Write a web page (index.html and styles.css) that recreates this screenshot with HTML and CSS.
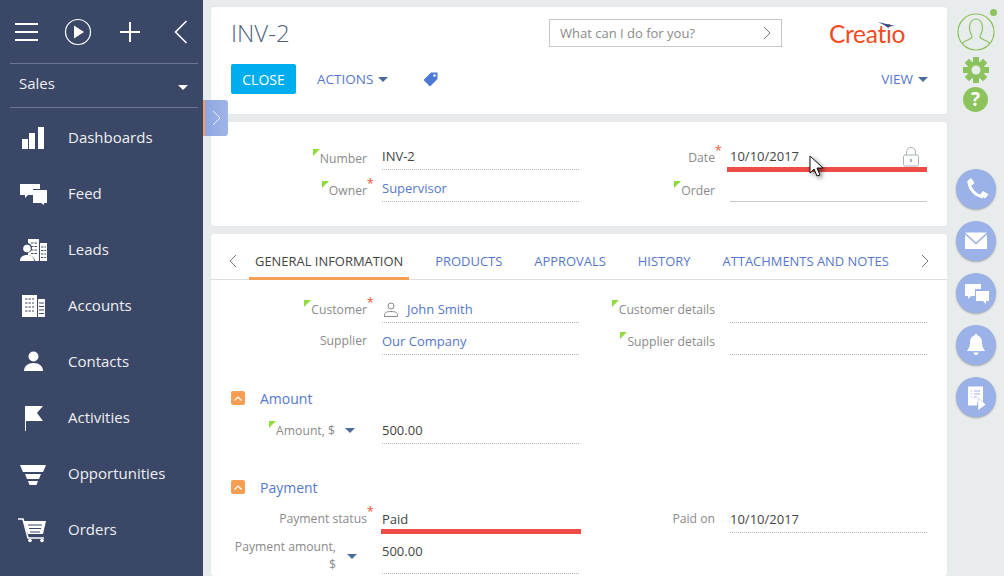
FILE: index.html
```html
<!DOCTYPE html>
<html lang="en">
<head>
<meta charset="UTF-8">
<meta name="viewport" content="width=device-width, initial-scale=1.0">
<title>INV-2</title>
<link rel="stylesheet" href="styles.css">
</head>
<body>

<aside class="sidebar">
    <div class="toolbar">
        <svg class="tool-icon" width="24" height="20" viewBox="0 0 24 20"><path d="M0 2h23M0 10h23M0 18h23" stroke="#fff" stroke-width="2"/></svg>
        <svg class="tool-icon tool-play" width="28" height="28" viewBox="0 0 28 28"><circle cx="14" cy="14" r="12.5" fill="none" stroke="#fff" stroke-width="1.2"/><path d="M10 7.5l10 6.5-10 6.5z" fill="#fff"/></svg>
        <svg class="tool-icon tool-plus" width="22" height="22" viewBox="0 0 22 22"><path d="M1 11h20M11 1v20" stroke="#fff" stroke-width="2"/></svg>
        <svg class="tool-icon tool-back" width="14" height="24" viewBox="0 0 14 24"><path d="M12.5 1L1.5 12l11 11" fill="none" stroke="#fff" stroke-width="1.6"/></svg>
    </div>
    <div class="workplace">
        <span>Sales</span>
        <i class="workplace-caret"></i>
    </div>
    <nav class="nav">
        <a class="nav-item">
            <svg width="28" height="28" viewBox="0 0 28 28"><path d="M2 15h6v10H2zM9 9h6v16H9zM18 3h6v22h-6z" fill="#fff"/></svg>
            <span>Dashboards</span>
        </a>
        <a class="nav-item">
            <svg width="28" height="28" viewBox="0 0 28 28"><path d="M0 4h20v5h-7v6H8l-3 3v-3H0z" fill="#fff"/><path d="M13 10h14v13h-3v2l-3-2H13z" fill="#fff"/></svg>
            <span>Feed</span>
        </a>
        <a class="nav-item">
            <svg width="28" height="28" viewBox="0 0 28 28"><path d="M8 3h11v22H8zM20 7h7v18h-7z" fill="#fff"/><path d="M11 7h6M11 10.500h6M11 14h6M11 17.500h6M21 11h5M21 14.500h5M21 18h5M21 21.500h5" stroke="#3a4766" stroke-width="1" stroke-dasharray="2.500 1"/><circle cx="7" cy="12" r="5" fill="#3a4766"/><path d="M0 26c0-5 3-7 7-7s8 2 8 7z" fill="#3a4766"/><circle cx="7" cy="12.500" r="3.800" fill="#fff"/><path d="M0 25c0-4 3-6 7-6s7 2 7 6z" fill="#fff"/></svg>
            <span>Leads</span>
        </a>
        <a class="nav-item">
            <svg width="28" height="28" viewBox="0 0 28 28"><path d="M2 3h15v22H2zM18 7h7v18h-7z" fill="#fff"/><path d="M5 7h9M5 11h9M5 15h9M5 19h9" stroke="#3a4766" stroke-width="1" stroke-dasharray="2.500 1"/><path d="M19 11h5M19 14.500h5M19 18h5M19 21.500h5" stroke="#3a4766" stroke-width="1"/></svg>
            <span>Accounts</span>
        </a>
        <a class="nav-item">
            <svg width="28" height="28" viewBox="0 0 28 28"><circle cx="13.500" cy="8.500" r="5" fill="#fff"/><path d="M4 23c0-5 4-8 9.500-8s9.500 3 9.500 8z" fill="#fff"/></svg>
            <span>Contacts</span>
        </a>
        <a class="nav-item">
            <svg width="28" height="28" viewBox="0 0 28 28"><path d="M5 2h1v25H5z" fill="#fff"/><path d="M6 2h17l-6 7 6 8H6z" fill="#fff"/></svg>
            <span>Activities</span>
        </a>
        <a class="nav-item">
            <svg width="28" height="28" viewBox="0 0 28 28"><path d="M0 5h26l-3 7H3zM5 14h16l-2 5H7zM8 21h10l-1.500 4h-7z" fill="#fff"/></svg>
            <span>Opportunities</span>
        </a>
        <a class="nav-item">
            <svg class="cart" width="28" height="28" viewBox="0 0 28 28"><path d="M-2 3h5l5 19h16" fill="none" stroke="#fff" stroke-width="1.600"/><path d="M3.500 5H26l-3 13H8z" fill="#fff"/><path d="M8 9h14M9 12.500h12M10 16h10" stroke="#3a4766" stroke-width="1.200"/><circle cx="10" cy="24.500" r="1.800" fill="#fff"/><circle cx="22" cy="24.500" r="1.800" fill="#fff"/></svg>
            <span>Orders</span>
        </a>
        <a class="nav-item">
            <svg width="28" height="28" viewBox="0 0 28 28"><path d="M4 8h19v20H4z" fill="#fff"/></svg>
        </a>
    </nav>
</aside>

<div class="panel-toggle">
    <svg width="9" height="16" viewBox="0 0 9 16"><path d="M1 1l7 7-7 7" fill="none" stroke="#e4ebfa" stroke-width="1"/></svg>
</div>

<main class="content">
    <section class="card card-header">
        <div class="header-top">
            <h1 class="page-title">INV-2</h1>
            <div class="search-box">
                <span>What can I do for you?</span>
                <svg width="8" height="14" viewBox="0 0 8 14"><path d="M1 1l6 6-6 6" fill="none" stroke="#777" stroke-width="1"/></svg>
            </div>
            <div class="logo">
                <span class="logo-text">Creatio</span>
                <svg class="logo-swoosh" width="18" height="7" viewBox="0 0 18 7"><path d="M0 0l17 4-7 .5 1.500 2.500L7 3.500z" fill="#2b4a86"/></svg>
            </div>
        </div>
        <div class="header-actions">
            <button class="btn-close">CLOSE</button>
            <a class="action-link">ACTIONS <i class="caret"></i></a>
            <svg class="tag-icon" width="15" height="15" viewBox="0 0 15 15"><path d="M8 .5h6.500V7L7 14.500.5 8z" fill="#4d78d6"/><circle cx="11.500" cy="3.500" r="1.300" fill="#fff"/></svg>
            <a class="action-link view-link">VIEW <i class="caret"></i></a>
        </div>
    </section>

    <section class="card card-record">
        <div class="field-grid">
            <div class="field">
                <label class="field-label"><span class="mark">Number</span></label>
                <div class="field-value">INV-2</div>
            </div>
            <div class="field">
                <label class="field-label plain"><span class="req">Date</span></label>
                <div class="field-value no-line">10/10/2017
                    <svg class="lock-icon" width="16" height="20" viewBox="0 0 16 20"><path d="M3.500 8V5a4.500 4.500 0 0 1 9 0v3" fill="none" stroke="#a9afbb" stroke-width="1"/><rect x=".5" y="8" width="15" height="11" rx="1.500" fill="none" stroke="#a9afbb" stroke-width="1"/><rect x="7" y="12" width="2" height="3" fill="#a9afbb"/></svg>
                </div>
            </div>
            <div class="field">
                <label class="field-label"><span class="mark req">Owner</span></label>
                <div class="field-value"><a class="link">Supervisor</a></div>
            </div>
            <div class="field">
                <label class="field-label"><span class="mark">Order</span></label>
                <div class="field-value solid"></div>
            </div>
        </div>
    </section>

    <section class="card card-tabs">
        <div class="tabs">
            <svg class="tab-arrow" width="8" height="14" viewBox="0 0 8 14"><path d="M7 1L1 7l6 6" fill="none" stroke="#777" stroke-width="1"/></svg>
            <a class="tab tab-active">GENERAL INFORMATION</a>
            <a class="tab">PRODUCTS</a>
            <a class="tab">APPROVALS</a>
            <a class="tab">HISTORY</a>
            <a class="tab">ATTACHMENTS AND NOTES</a>
            <svg class="tab-arrow tab-arrow-right" width="8" height="14" viewBox="0 0 8 14"><path d="M1 1l6 6-6 6" fill="none" stroke="#777" stroke-width="1"/></svg>
        </div>
        <div class="tab-body">
            <div class="field-grid">
                <div class="field">
                    <label class="field-label"><span class="mark req">Customer</span></label>
                    <div class="field-value">
                        <svg class="contact-icon" width="14" height="15" viewBox="0 0 14 15"><circle cx="7" cy="4" r="3" fill="none" stroke="#888" stroke-width="1"/><path d="M.5 14.500v-2c0-2 2.500-3 6.500-3s6.500 1 6.500 3v2z" fill="none" stroke="#888" stroke-width="1"/></svg>
                        <a class="link">John Smith</a>
                    </div>
                </div>
                <div class="field">
                    <label class="field-label"><span class="mark">Customer details</span></label>
                    <div class="field-value"></div>
                </div>
                <div class="field">
                    <label class="field-label plain"><span>Supplier</span></label>
                    <div class="field-value"><a class="link">Our Company</a></div>
                </div>
                <div class="field">
                    <label class="field-label"><span class="mark">Supplier details</span></label>
                    <div class="field-value"></div>
                </div>
            </div>

            <div class="group-head">
                <span class="group-toggle"><svg width="8" height="5" viewBox="0 0 8 5"><path d="M.5 4.500L4 1l3.500 3.500" fill="none" stroke="#fff" stroke-width="1.200"/></svg></span>
                <a class="link group-title">Amount</a>
            </div>
            <div class="field-grid">
                <div class="field">
                    <label class="field-label"><span class="mark">Amount, $</span><i class="caret currency"></i></label>
                    <div class="field-value">500.00</div>
                </div>
            </div>

            <div class="group-head">
                <span class="group-toggle"><svg width="8" height="5" viewBox="0 0 8 5"><path d="M.5 4.500L4 1l3.500 3.500" fill="none" stroke="#fff" stroke-width="1.200"/></svg></span>
                <a class="link group-title">Payment</a>
            </div>
            <div class="field-grid">
                <div class="field">
                    <label class="field-label plain"><span class="req">Payment status</span></label>
                    <div class="field-value no-line">Paid</div>
                </div>
                <div class="field">
                    <label class="field-label plain"><span>Paid on</span></label>
                    <div class="field-value">10/10/2017</div>
                </div>
                <div class="field">
                    <label class="field-label plain wrap"><span class="wrap-text">Payment amount, $</span><i class="caret currency"></i></label>
                    <div class="field-value">500.00</div>
                </div>
            </div>
        </div>
    </section>
</main>

<aside class="rightbar">
    <div class="avatar">
        <svg width="38" height="38" viewBox="0 0 38 38"><circle cx="19" cy="19" r="18" fill="none" stroke="#8cc35d" stroke-width="1.200"/><path d="M5 31c2-4 9-4 10-7 .3-1-2-4-2.500-8C12 10 15 6 19 6s7 4 6.500 10c-.5 4-2.800 7-2.500 8 1 3 8 3 10 7" fill="none" stroke="#8cc35d" stroke-width="1.200"/></svg>
        <i class="avatar-dot"></i>
    </div>
    <svg class="gear" width="26" height="26" viewBox="0 0 26 26">
        <g fill="#8cc35d">
            <circle cx="13" cy="13" r="9"/>
            <rect x="10" y="0" width="6" height="26"/>
            <rect x="0" y="10" width="26" height="6"/>
            <rect x="10" y="0" width="6" height="26" transform="rotate(45 13 13)"/>
            <rect x="10" y="0" width="6" height="26" transform="rotate(-45 13 13)"/>
        </g>
        <circle cx="13" cy="13" r="4.500" fill="#e9eced"/>
    </svg>
    <div class="help">?</div>

    <div class="comm-buttons">
        <div class="comm-btn">
            <svg width="40" height="40" viewBox="0 0 40 40"><path d="M13 13c.5 7 6 13.500 14 15" fill="none" stroke="#fff" stroke-width="3"/><path d="M11.500 12.500l3.500-3 3 4.500-3.500 2.500zM24.500 26l2.500-3.500 5 3-3 3.500z" fill="#fff" stroke="#fff" stroke-width="1" stroke-linejoin="round"/></svg>
        </div>
        <div class="comm-btn">
            <svg width="40" height="40" viewBox="0 0 40 40"><path d="M9 12h22l-11 10z" fill="#fff" transform="translate(0 -.500)"/><path d="M9 13.500l11 10 11-10V28H9z" fill="#fff"/></svg>
        </div>
        <div class="comm-btn">
            <svg width="40" height="40" viewBox="0 0 40 40"><path d="M9 11h16v5h-6v7h-4l-3 3v-3H9z" fill="#fff"/><path d="M20 18h13v10h-3v3l-3-3h-7z" fill="#fff"/></svg>
        </div>
        <div class="comm-btn">
            <svg width="40" height="40" viewBox="0 0 40 40"><path d="M20 9c1 0 1.500 .7 1.500 1.500 3.500 1 4.500 4 4.500 7.500 0 4 2 6 3 8H11c1-2 3-4 3-8 0-3.500 1-6.500 4.500-7.500C18.500 9.700 19 9 20 9z" fill="#fff"/><path d="M17.500 27.500h5c0 1.500-1 2.500-2.500 2.500s-2.500-1-2.500-2.500z" fill="#fff"/></svg>
        </div>
        <div class="comm-btn">
            <svg width="40" height="40" viewBox="0 0 40 40"><path d="M12 9.500h15v17H22v-3l-1 5h-9z" fill="#fff"/><path d="M15 14h1M18 14h6M15 17h1M18 17h6M15 20h1M18 20h3" stroke="#9bb2e8" stroke-width="1"/><path d="M22 21l8 6.500-8 6z" fill="#fff" stroke="#9bb2e8" stroke-width=".5"/></svg>
        </div>
    </div>
</aside>

<!-- red marks and pointer drawn over the screenshot -->
<i class="red-mark red-mark-date"></i>
<i class="red-mark red-mark-status"></i>
<svg class="pointer" width="20" height="26" viewBox="0 0 20 26"><path d="M2 1v17l4-4 3 7 3-1-3-7h6z" fill="#fff" stroke="#111" stroke-width="1"/></svg>

</body>
</html>
```

FILE: styles.css
```css
html, body {
    margin: 0;
    padding: 0;
    height: 576px;
    overflow: hidden;
}

body {
    display: flex;
    position: relative;
    font-family: "Open Sans", Arial, sans-serif;
    font-size: 13px;
    color: #444;
    background-color: #e9eced;
}

/* left menu */
.sidebar {
    width: 203px;
    flex: none;
    height: 576px;
    overflow: hidden;
    background-color: #3a4766;
    color: #fff;
}

.toolbar {
    height: 63px;
    margin: 0 5px 0 10px;
    border-bottom: 1px solid #6b7690;
    display: flex;
    align-items: center;
}

.tool-icon {
    flex: none;
    display: block;
}

.toolbar .tool-icon:first-child {
    margin-left: 5px;
}

.tool-play {
    margin-left: 25px;
}

.tool-plus {
    margin-left: 27px;
}

.tool-back {
    margin-left: 33px;
}

.workplace {
    height: 38px;
    margin: 0 5px 0 10px;
    padding: 0 10px 5px 9px;
    border-bottom: 1px solid #6b7690;
    display: flex;
    align-items: center;
    justify-content: space-between;
    font-size: 15px;
    color: #eef0f4;
}

.workplace-caret {
    width: 0;
    height: 0;
    border-left: 5px solid transparent;
    border-right: 5px solid transparent;
    border-top: 5px solid #fff;
    margin-top: 8px;
}

.nav {
    margin-top: 2px;
}

.nav-item {
    height: 56px;
    padding-left: 20px;
    display: flex;
    align-items: center;
    gap: 20px;
    font-size: 15px;
    color: #eef0f4;
}

.nav-item span {
    margin-top: -2px;
}

.nav-item svg {
    flex: none;
    overflow: visible;
}

.panel-toggle {
    position: absolute;
    left: 203px;
    top: 100px;
    width: 23px;
    height: 36px;
    border-left: 2px solid #f79e55;
    border-radius: 0 3px 3px 0;
    background: linear-gradient(to right, #8ea7e2, #a0b5e8);
    display: flex;
    align-items: center;
    justify-content: center;
    z-index: 2;
}

/* main column */
.content {
    width: 736px;
    flex: none;
    padding: 7px 0 0 8px;
    display: flex;
    flex-direction: column;
    gap: 8px;
}

.card {
    background-color: #fff;
    border-radius: 3px;
    box-shadow: 0 0 1px rgba(0, 0, 0, 0.12);
}

.card-header {
    height: 107px;
    box-sizing: border-box;
    padding: 12px 20px 0;
}

.header-top {
    display: flex;
    align-items: center;
    height: 28px;
}

.page-title {
    width: 318px;
    flex: none;
    margin: 0 0 2px;
    font-size: 24px;
    font-weight: 300;
    color: #4f5f7c;
}

.search-box {
    width: 233px;
    height: 28px;
    flex: none;
    box-sizing: border-box;
    border: 1px solid #c4c8c8;
    padding: 0 10px;
    display: flex;
    align-items: center;
    justify-content: space-between;
    font-size: 13px;
    color: #8a8a8a;
}

.logo {
    position: relative;
    margin-left: 47px;
}

.logo-text {
    font-family: "Lato", Arial, sans-serif;
    font-size: 24.5px;
    font-weight: 400;
    letter-spacing: -0.3px;
    color: #f24a22;
}

.logo-swoosh {
    position: absolute;
    left: 49px;
    top: 3px;
}

.header-actions {
    display: flex;
    align-items: center;
    height: 30px;
    margin-top: 17px;
}

.btn-close {
    width: 65px;
    height: 30px;
    border: none;
    border-radius: 2px;
    padding: 0;
    background-color: #00aeef;
    color: #fff;
    font-family: inherit;
    font-size: 14px;
}

.action-link {
    display: flex;
    align-items: center;
    gap: 5px;
    margin-left: 21px;
    font-size: 13.5px;
    color: #5577cc;
}

.caret {
    display: inline-block;
    width: 0;
    height: 0;
    border-left: 5px solid transparent;
    border-right: 5px solid transparent;
    border-top: 5px solid #4e6a9c;
}

.tag-icon {
    margin-left: 35px;
}

.view-link {
    margin-left: auto;
    margin-right: -1px;
}

.field-grid {
    display: grid;
    grid-template-columns: 348px 348px;
}

.field {
    display: grid;
    grid-template-columns: 136px 197px;
    column-gap: 15px;
    height: 32px;
}

.field-label {
    display: flex;
    justify-content: flex-end;
    align-items: flex-start;
    padding-top: 10px;
    line-height: 18px;
    font-size: 12.2px;
    color: #8a8a8a;
}

.field-label.plain {
    padding-top: 9px;
}

.card-record .field-label {
    padding-top: 12px;
}

.card-record .field-label.plain {
    padding-top: 11px;
}

.field-label span {
    position: relative;
}

/* green corner on labels that can be localized */
.mark::before {
    content: "";
    position: absolute;
    left: -7px;
    top: -1px;
    border-top: 7px solid #8fdc3c;
    border-right: 7px solid transparent;
}

.req::after {
    content: "*";
    position: absolute;
    right: -7px;
    top: -5px;
    font-size: 13px;
    line-height: 13px;
    color: #f4563b;
}

.field-value {
    position: relative;
    box-sizing: border-box;
    padding-top: 9px;
    line-height: 18px;
    border-bottom: 1px dotted #b5b5b5;
    color: #444;
    display: flex;
    align-items: flex-start;
}

.field-value.no-line {
    border-bottom-color: transparent;
}

.field-value.solid {
    border-bottom: 1px solid #c4c8c8;
}

.link {
    color: #5577cc;
}

.lock-icon {
    position: absolute;
    right: 8px;
    top: 9px;
}

.card-record {
    height: 104px;
    box-sizing: border-box;
    padding: 16px 20px 0;
}

.card-tabs {
    flex: 1;
}

/* tabs */
.tabs {
    height: 46px;
    box-sizing: border-box;
    border-bottom: 1px solid #dcdfe0;
    padding-left: 18px;
    display: flex;
    align-items: stretch;
    gap: 20px;
}

.tab {
    height: 46px;
    box-sizing: border-box;
    padding: 0 6px;
    overflow: hidden;
    white-space: nowrap;
    font-size: 12.95px;
    line-height: 55px;
    color: #5577cc;
}

.tab-active {
    color: #444;
    border-bottom: 3px solid #f79e55;
}

.tab-arrow {
    align-self: center;
    flex: none;
    margin: 9px -8px 0 0;
}

.tab-arrow-right {
    margin: 9px 18px 0 auto;
}

.tab-body {
    padding: 11px 20px 0;
}

.contact-icon {
    margin: 2px 9px 0 2px;
}

.group-head {
    display: flex;
    align-items: center;
    height: 14px;
    margin: 36px 0 7px;
}

.group-toggle {
    width: 14px;
    height: 14px;
    border-radius: 2px;
    background-color: #f79e55;
    display: flex;
    align-items: center;
    justify-content: center;
}

.group-title {
    margin-left: 15px;
    font-size: 14px;
}

.currency {
    flex: none;
    margin: 6px 12px 0 10px;
}

.field-label.wrap {
    padding-top: 5px;
}

.wrap-text {
    width: 104px;
    text-align: right;
}

.field-label.wrap .currency {
    margin: 16px 10px 0 11px;
}

/* right bar */
.rightbar {
    flex: 1;
    padding-top: 13px;
    display: flex;
    flex-direction: column;
    align-items: center;
}

.avatar {
    position: relative;
    width: 38px;
    height: 38px;
}

.avatar svg {
    display: block;
}

.avatar-dot {
    position: absolute;
    right: -2px;
    top: -4px;
    width: 7px;
    height: 7px;
    border-radius: 50%;
    background-color: #8cc35d;
}

.gear {
    margin-top: 6px;
    display: block;
}

.help {
    width: 25px;
    height: 25px;
    margin-top: 4px;
    border-radius: 50%;
    background-color: #8cc35d;
    color: #fff;
    font-size: 19px;
    font-weight: 700;
    line-height: 25px;
    text-align: center;
}

.comm-buttons {
    margin-top: 57px;
    display: flex;
    flex-direction: column;
    gap: 12px;
}

.comm-btn {
    width: 40px;
    height: 40px;
    border-radius: 50%;
    background-color: #9bb2e8;
    box-shadow: 0 1px 2px rgba(0, 0, 0, 0.3);
}

.comm-btn svg {
    display: block;
}

/* annotations on top of the page */
.red-mark {
    position: absolute;
    width: 200px;
    height: 5px;
    background-color: #ec4c45;
}

.red-mark-date {
    left: 727px;
    top: 167px;
}

.red-mark-status {
    left: 381px;
    top: 529px;
}

.pointer {
    position: absolute;
    left: 808px;
    top: 155px;
    filter: drop-shadow(2px 2px 2px rgba(0, 0, 0, 0.5));
}
```
